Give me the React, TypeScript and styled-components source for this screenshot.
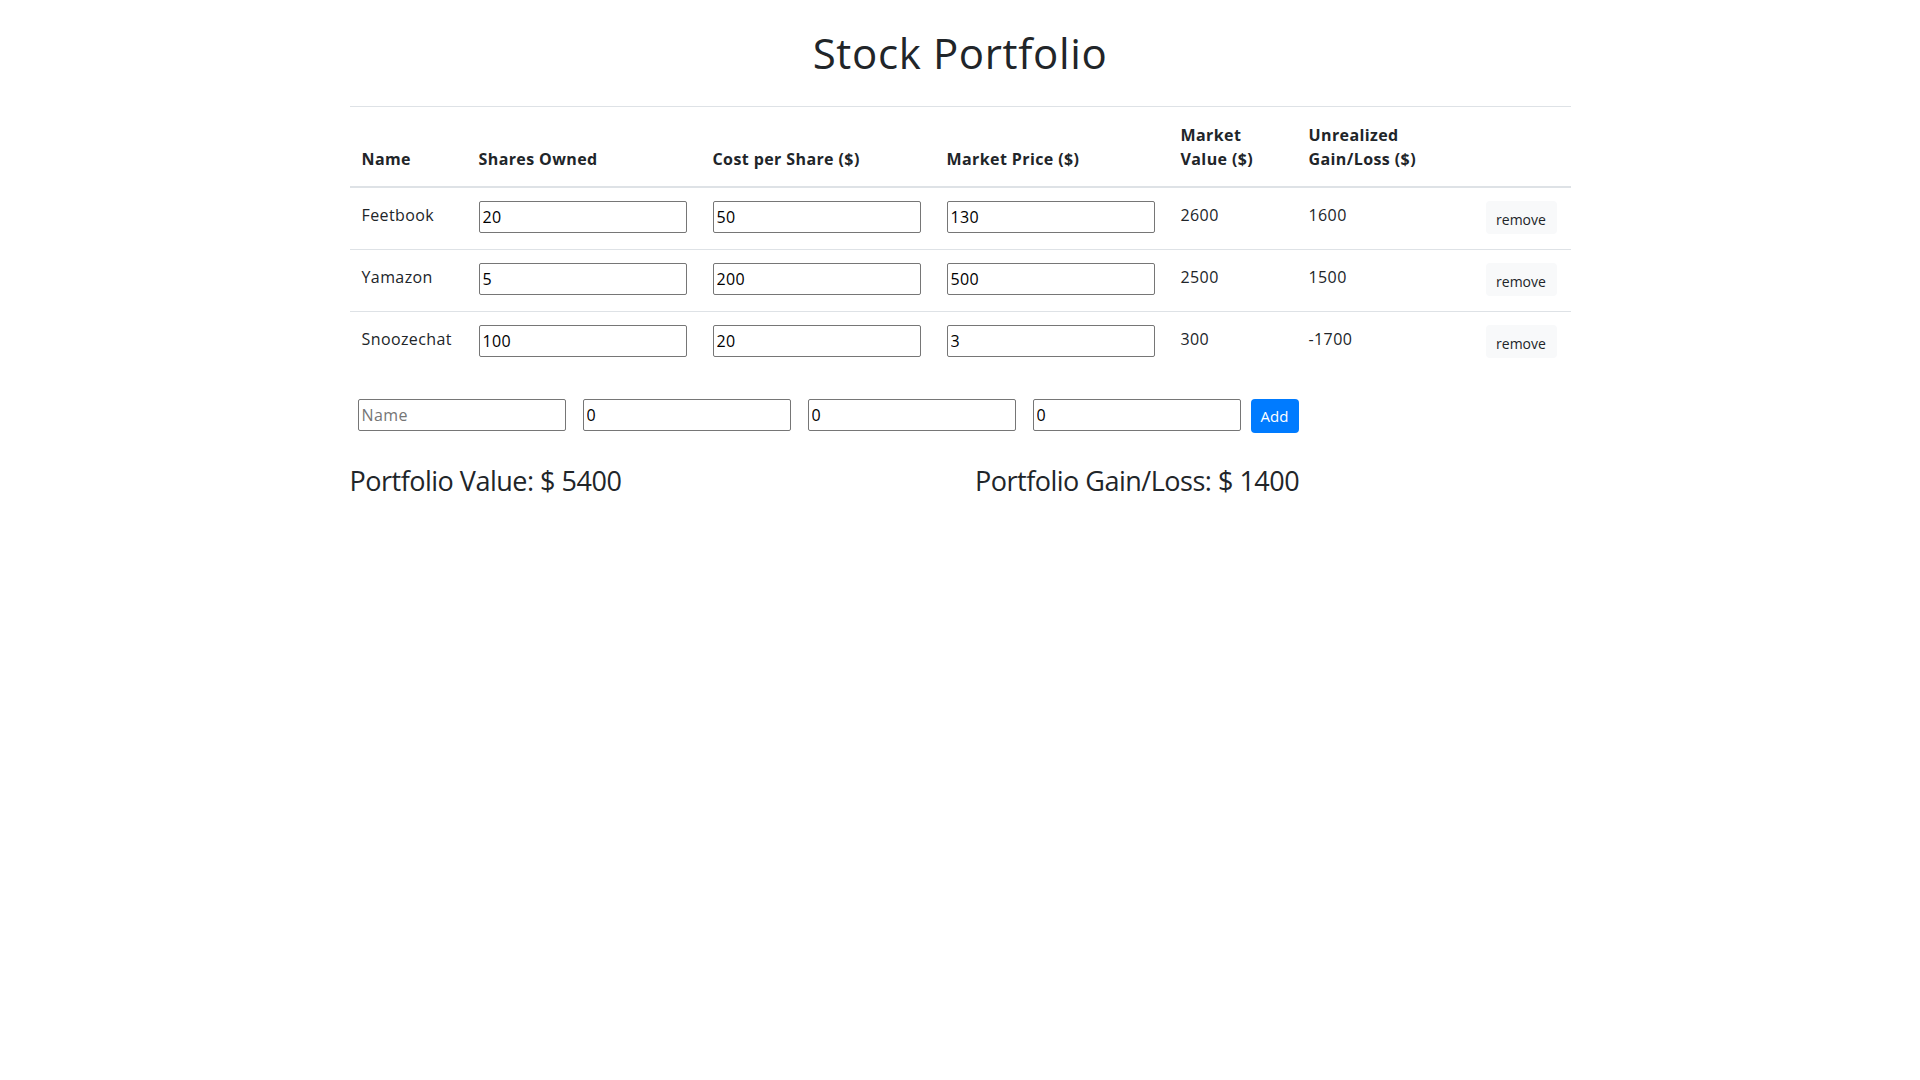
import React from "react";
import styled, { createGlobalStyle } from "styled-components";

const GlobalStyle = createGlobalStyle`
  html, body {
    margin: 0;
    padding: 0;
    background: #ffffff;
  }
  body {
    font-family: "Open Sans", "Noto Sans", sans-serif;
    font-size: 16px;
    line-height: 1.5;
    letter-spacing: 0.4px;
    color: #212529;
  }
  * { box-sizing: border-box; }
`;

const Page = styled.div`
  width: 1221px;
  margin: 0 auto;
`;

const Title = styled.h1`
  margin: 29px 0 29px;
  font-size: 42px;
  font-weight: 400;
  line-height: 48px;
  letter-spacing: 0.65px;
  text-align: center;
`;

const Table = styled.table`
  width: 100%;
  table-layout: fixed;
  border-collapse: separate;
  border-spacing: 0;
`;

const Col = styled.col<{ $w: number }>`
  width: ${(p) => p.$w}px;
`;

const HeadCell = styled.th`
  padding: 16px 12px 15px;
  border-top: 1px solid #dee2e6;
  border-bottom: 1px solid #dee2e6;
  vertical-align: bottom;
  text-align: left;
  font-weight: 700;
  line-height: 24px;
`;

const Cell = styled.td<{ $text?: boolean }>`
  padding: ${(p) => (p.$text ? "15px 12px 13px" : "13px 12px 15px")};
  border-top: 1px solid #dee2e6;
  vertical-align: top;
  line-height: 24px;
`;

const Field = styled.input`
  display: block;
  width: 208px;
  height: 32px;
  margin: 0;
  padding: 1px 2px 1px 3px;
  border: 1px solid #767676;
  border-radius: 2px;
  font-family: inherit;
  font-size: 16px;
  letter-spacing: 0.4px;
  color: #000000;
  background: #ffffff;
  &::placeholder {
    color: #757575;
  }
`;

const RemoveButton = styled.button`
  display: block;
  width: 71px;
  height: 33px;
  padding: 4px 0 0;
  border: none;
  border-radius: 4px;
  background: #f8f9fa;
  color: #212529;
  font-family: inherit;
  font-size: 14px;
  line-height: 29px;
  text-align: center;
  cursor: pointer;
`;

const AddRow = styled.div`
  display: flex;
  align-items: flex-start;
  gap: 10px;
  margin-top: 26px;
  padding-left: 8px;
`;

const Fields = styled.div`
  display: flex;
  gap: 17px;
`;

const AddButton = styled.button`
  width: 48px;
  height: 34px;
  padding: 0;
  border: none;
  border-radius: 4px;
  background: #007bff;
  color: #ffffff;
  font-family: inherit;
  font-size: 15px;
  line-height: 34px;
  text-align: center;
  cursor: pointer;
`;

const Totals = styled.div`
  display: grid;
  grid-template-columns: 1fr 1fr;
  margin: 31px -15px 0;
`;

const Total = styled.h3`
  margin: 0;
  padding: 0 15px;
  font-size: 27px;
  font-weight: 400;
  line-height: 33.6px;
  letter-spacing: -0.5px;
`;

type Stock = { name: string; shares: number; cost: number; price: number };

const stocks: Stock[] = [
  { name: "Feetbook", shares: 20, cost: 50, price: 130 },
  { name: "Yamazon", shares: 5, cost: 200, price: 500 },
  { name: "Snoozechat", shares: 100, cost: 20, price: 3 },
];

export default function App() {
  const value = stocks.reduce((s, x) => s + x.shares * x.price, 0);
  const gain = stocks.reduce((s, x) => s + x.shares * (x.price - x.cost), 0);
  return (
    <>
      <GlobalStyle />
      <Page>
        <Title>Stock Portfolio</Title>
        <Table>
          <colgroup>
            <Col $w={117} />
            <Col $w={234} />
            <Col $w={234} />
            <Col $w={234} />
            <Col $w={128} />
            <Col $w={177} />
            <Col $w={97} />
          </colgroup>
          <thead>
            <tr>
              <HeadCell>Name</HeadCell>
              <HeadCell>Shares Owned</HeadCell>
              <HeadCell>Cost per Share ($)</HeadCell>
              <HeadCell>Market Price ($)</HeadCell>
              <HeadCell>Market Value ($)</HeadCell>
              <HeadCell>Unrealized Gain/Loss ($)</HeadCell>
              <HeadCell></HeadCell>
            </tr>
          </thead>
          <tbody>
            {stocks.map((s) => (
              <tr key={s.name}>
                <Cell $text>{s.name}</Cell>
                <Cell>
                  <Field type="text" defaultValue={s.shares} />
                </Cell>
                <Cell>
                  <Field type="text" defaultValue={s.cost} />
                </Cell>
                <Cell>
                  <Field type="text" defaultValue={s.price} />
                </Cell>
                <Cell $text>{s.shares * s.price}</Cell>
                <Cell $text>{s.shares * (s.price - s.cost)}</Cell>
                <Cell>
                  <RemoveButton>remove</RemoveButton>
                </Cell>
              </tr>
            ))}
          </tbody>
        </Table>
        <AddRow>
          <Fields>
            <Field type="text" placeholder="Name" />
            <Field type="text" defaultValue="0" />
            <Field type="text" defaultValue="0" />
            <Field type="text" defaultValue="0" />
          </Fields>
          <AddButton>Add</AddButton>
        </AddRow>
        <Totals>
          <Total>Portfolio Value: $ {value}</Total>
          <Total>Portfolio Gain/Loss: $ {gain}</Total>
        </Totals>
      </Page>
    </>
  );
}
